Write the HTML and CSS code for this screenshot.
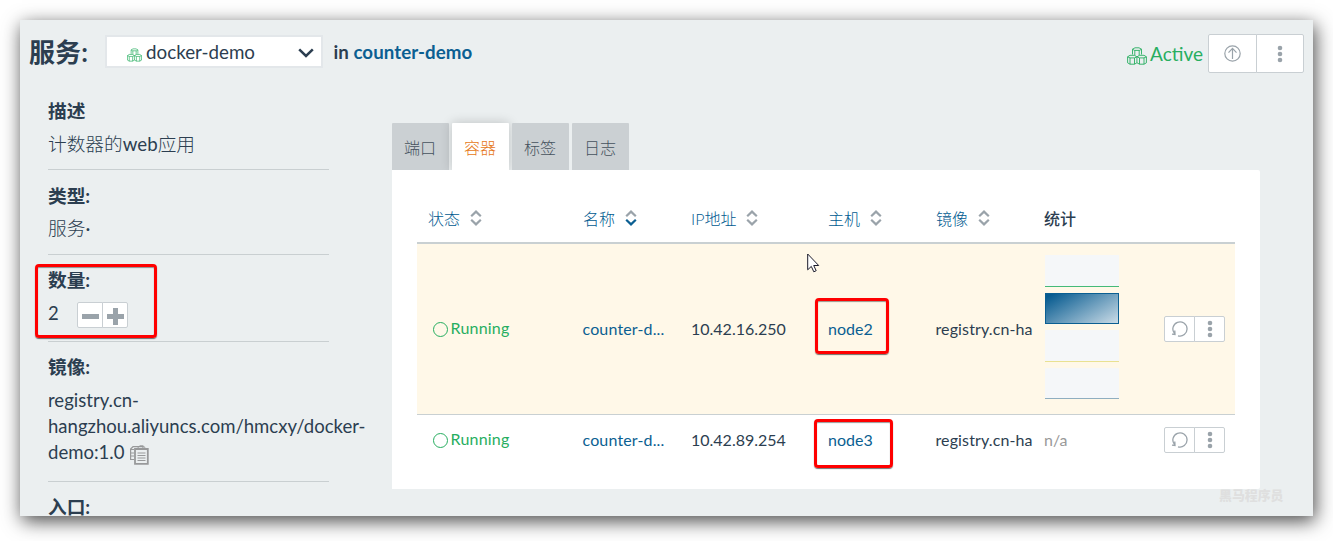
FILE: index.html
```html
<!DOCTYPE html>
<html lang="zh-CN">
<head>
<meta charset="utf-8">
<title>docker-demo</title>
<link rel="stylesheet" href="styles.css">
</head>
<body>
<svg class="defs" width="0" height="0">
  <symbol id="cubes" viewBox="0 0 20 18">
    <g fill="none" stroke="currentColor" stroke-width=".9" stroke-linejoin="round">
      <path d="M5.500 7.500V2.200L8 .8h4l2.500 1.400v5.300M5.500 2.200 7.500 3.400h5l2-1.200M7.800 3.400v5M12.200 3.400v5"/>
      <path d="M.6 9.800 3 8.300h4.400l2.500 1.500v6L7.500 17.200H3L.6 15.800zM.6 9.800 3 10.900h4.500l2.400-1.100M3 10.900v6.300M7.500 10.900v6.300"/>
      <path d="M10 9.800l2.500-1.500H17l2.400 1.500v6L17 17.200h-4.500L10 15.800M10 9.800l2.500 1.100H17l2.400-1.100M12.500 10.900v6.300M17 10.900v6.300"/>
    </g>
  </symbol>
  <symbol id="sort" viewBox="0 0 12 16">
    <path d="M1.200 6.200 6 1.600l4.800 4.600" fill="none" stroke="#9aa3aa" stroke-width="2.200"/>
    <path d="M1.200 9.800 6 14.400l4.800-4.600" fill="none" stroke="currentColor" stroke-width="2.200"/>
  </symbol>
  <symbol id="dots" viewBox="0 0 6 18">
    <g fill="#9aa3aa"><circle cx="3" cy="3" r="2.300"/><circle cx="3" cy="9" r="2.300"/><circle cx="3" cy="15" r="2.300"/></g>
  </symbol>
  <symbol id="restart" viewBox="0 0 18 16">
    <path d="M3.400 12.400A7.100 7.100 0 1 1 7 14.800M1 13.200l3 .3-.2-4" fill="none" stroke="#9aa3aa" stroke-width="1.300"/>
  </symbol>
</svg>
<div class="window">
  <header class="header">
    <h1>服务:</h1>
    <div class="select">
      <svg class="cubes-sm"><use href="#cubes"/></svg>
      <span>docker-demo</span>
      <svg class="chevron" viewBox="0 0 16 10"><path d="M1.200 1.300 8 8l6.800-6.700" fill="none" stroke="currentColor" stroke-width="2.500"/></svg>
    </div>
    <div class="stack">in <a>counter-demo</a></div>
    <div class="state">
      <svg class="cubes-lg"><use href="#cubes"/></svg>
      <span>Active</span>
    </div>
    <div class="btns big">
      <button><svg width="17" height="17" viewBox="0 0 17 17"><g fill="none" stroke="#9aa3aa" stroke-width="1.200"><circle cx="8.500" cy="8.500" r="7.700"/><path d="M8.500 14V3.300M4.500 7.600l4-4.300 4 4.300"/></g></svg></button>
      <button><svg width="6" height="18"><use href="#dots"/></svg></button>
    </div>
  </header>
  <div class="content">
    <aside class="side">
      <section class="s-desc"><h2>描述</h2><p>计数器的<span class="latin">web</span>应用</p></section>
      <section class="s-type"><h2>类型:</h2><p>服务<span class="latin">·</span></p></section>
      <section class="s-scale"><h2>数量:</h2>
        <div class="scale"><span>2</span>
          <div class="btns mini">
            <button><svg width="17" height="17"><path d="M0 8.500h17" stroke="#9aa3aa" stroke-width="5"/></svg></button>
            <button><svg width="17" height="17"><path d="M0 8.500h17M8.500 0v17" stroke="#9aa3aa" stroke-width="5"/></svg></button>
          </div>
        </div>
      </section>
      <section class="s-image"><h2>镜像:</h2>
        <p class="image">registry.cn-<br>hangzhou.aliyuncs.com/hmcxy/docker-<br>demo:1.0 <svg class="clip" viewBox="0 0 19 20"><g fill="none" stroke="#98999a"><path d="M4 14.500H.6V4L3 1.700h10V4M1 4.500h3M1 8h3M1 11h3" stroke-width="1.200"/><path d="M5 4h12.800v14.800H5z" stroke-width="1.800"/><path d="M8 4.500V2.300L10 .8h3L15 2.500v2zM7.500 8h8M7.500 10.500h8M7.500 13h8M7.500 15.500h8" stroke-width="1"/></g></svg></p>
      </section>
      <section class="s-entry"><h2>入口:</h2></section>
    </aside>
    <main class="main">
      <nav class="tabs">
        <a>端口</a><a class="active">容器</a><a>标签</a><a>日志</a>
      </nav>
      <div class="panel">
        <div class="row head">
          <div>状态<svg class="sort"><use href="#sort"/></svg></div>
          <div class="sorted">名称<svg class="sort"><use href="#sort"/></svg></div>
          <div>IP地址<svg class="sort"><use href="#sort"/></svg></div>
          <div>主机<svg class="sort"><use href="#sort"/></svg></div>
          <div>镜像<svg class="sort"><use href="#sort"/></svg></div>
          <div class="plain">统计</div>
          <div></div>
        </div>
        <div class="row first">
          <div class="running"><i></i><span>Running</span></div>
          <div class="cell link name">counter-d...</div>
          <div class="cell">10.42.16.250</div>
          <div class="cell link">node2</div>
          <div class="cell image-cell">registry.cn-ha</div>
          <div class="charts">
            <span class="cpu"></span><span class="mem"></span><span class="net"></span><span class="disk"></span>
          </div>
          <div class="btns small">
            <button><svg width="18" height="16"><use href="#restart"/></svg></button>
            <button><svg width="6" height="18"><use href="#dots"/></svg></button>
          </div>
        </div>
        <div class="row second">
          <div class="running"><i></i><span>Running</span></div>
          <div class="cell link name">counter-d...</div>
          <div class="cell">10.42.89.254</div>
          <div class="cell link">node3</div>
          <div class="cell image-cell">registry.cn-ha</div>
          <div class="cell na">n/a</div>
          <div class="btns small">
            <button><svg width="18" height="16"><use href="#restart"/></svg></button>
            <button><svg width="6" height="18"><use href="#dots"/></svg></button>
          </div>
        </div>
      </div>
    </main>
  </div>
</div>
<div class="mark mark-scale"></div>
<div class="mark mark-node2"></div>
<div class="mark mark-node3"></div>
<svg class="cursor" viewBox="0 0 13 20"><path d="M.7 1v15.800l3.600-3.400 2.500 5.400 2.400-1.100-2.500-5.200h5z" fill="#fff" stroke="#1b1b2b" stroke-width="1"/></svg>
<div class="watermark">黑马程序员</div>
</body>
</html>
```
FILE: styles.css
```css
* { box-sizing: border-box; }
body {
  margin: 0; padding: 20px; height: 541px; overflow: hidden; position: relative;
  background: #fff; color: #2c3e50;
  font-family: Lato, "Noto Sans CJK SC", sans-serif; font-size: 16px;
}
h1, h2, p { margin: 0; }
svg { display: block; flex: none; }
.defs { position: absolute; }
.latin { font-weight: 400; }
.window {
  width: 1293px; height: 496px; overflow: hidden; background: #ebeff0;
  box-shadow: 2px 5px 18px rgba(0, 0, 0, .72);
}
.header { display: flex; height: 65px; padding: 0 9px; }
h1 { width: 76px; font-size: 26px; line-height: 65px; font-weight: 700; white-space: nowrap; letter-spacing: .1px; }
.select {
  display: flex; align-items: center; width: 218px; height: 33px; margin-top: 15px;
  padding: 0 7px 0 20px; border: 2px solid #e3e7ea; background: #fff; font-size: 18.8px;
}
.select span { margin-left: 4px; line-height: 30px; }
.cubes-sm { width: 15px; height: 14px; margin-top: 6px; color: #27ae60; }
.chevron { width: 16px; height: 10px; margin: 3px 0 0 auto; }
.stack { margin-left: 10.500px; font-size: 18.7px; line-height: 64px; font-weight: 700; letter-spacing: .05px; }
a, .link { color: #0b5f92; }
.state { display: flex; align-items: center; height: 68px; margin-left: auto; color: #27ae60; font-size: 19px; }
.state span { margin: 0 5px 0 3px; line-height: 68px; height: 68px; }
.cubes-lg { width: 20px; height: 18px; margin-top: 3px; }
.btns { display: flex; }
.btns button {
  display: flex; align-items: center; justify-content: center; padding: 0;
  border: 1px solid #c9cfd3; background: #fff; border-radius: 0;
}
.btns button + button { margin-left: -1px; }
.btns button:first-child { border-radius: 2px 0 0 2px; }
.btns button:last-child { border-radius: 0 2px 2px 0; }
.big { height: 39px; margin-top: 14px; }
.big button { width: 49px; }
.big button + button { width: 48px; }
.content { display: flex; height: 431px; }
.side { width: 372px; padding-left: 28px; font-size: 18.7px; }
.side section { width: 281px; padding-top: 13px; border-bottom: 1px solid #c9cfd1; white-space: nowrap; }
.side h2 { font-size: 18.7px; line-height: 26px; font-weight: 700; }
.side p { line-height: 38px; font-weight: 300; }
.side .s-desc, .side .s-type { height: 85px; }
.side .s-desc p { line-height: 40px; }
.side .s-scale { height: 87px; padding-top: 12px; }
.side .s-image { height: 140px; padding-top: 12px; }
.side .s-entry { border: 0; height: 34px; padding-top: 12px; }
.scale { display: flex; height: 37px; padding-top: 9px; }
.scale > span { width: 29px; line-height: 22px; font-size: 18.5px; }
.mini button { width: 26px; height: 26px; padding-top: 2px; }
.side .image { padding-top: 7px; line-height: 26px; font-weight: 400; font-size: 18.550px; }
.clip { display: inline-block; width: 19px; height: 20px; margin-left: 1px; vertical-align: -6px; }
.main { width: 868px; padding-top: 38px; }
.tabs { display: flex; gap: 3px; height: 47px; }
.tabs a {
  width: 57px; height: 47px; padding-right: 1px; line-height: 50px; text-align: center; font-weight: 300;
  background: #cbd0d3; color: #46525e; border-radius: 1px 1px 0 0;
}
.tabs .active { background: #fff; color: #e67817; box-shadow: 0 0 12px rgba(0, 0, 0, .2); }
.panel { position: relative; height: 319px; padding: 24px 25px; background: #fff; border-radius: 0 2px 2px 0; }
.row {
  display: grid; grid-template-columns: 156px 108px 137px 108px 108px 120px 61px;
  align-items: center; padding-left: 10px; white-space: nowrap;
}
.head { height: 50px; border-bottom: 2px solid #c9d0d2; color: #005a90; font-weight: 300; }
.head > div { display: flex; align-items: center; }
.head > div:first-child { padding-left: 1px; }
.sort { width: 12px; height: 16px; margin-left: 10px; color: #9aa3aa; }
.sorted .sort { color: #0b5f92; }
.head .plain { color: #2c3e50; font-weight: 500; }
.first { height: 171px; border-bottom: 1px solid #c9d0d2; background: #fff8e8; }
.second { height: 50px; }
.cell { padding-bottom: 2px; }
.name { margin-left: -.5px; letter-spacing: .15px; }
.image-cell { margin-left: -.5px; letter-spacing: .12px; }
.running { display: flex; align-items: center; color: #27ae60; padding-left: 5.500px; }
.running i { width: 15px; height: 15px; margin-right: 3px; border: 1px solid #27ae60; border-radius: 50%; }
.running span { padding-bottom: 3px; letter-spacing: .2px; }
.na { color: #999; }
.charts { display: grid; gap: 6px; padding-left: 1px; margin-top: -4px; }
.charts span { width: 74px; height: 32px; background: #f5f7f9; border-bottom: 1px solid #45ba78; }
.charts .mem { height: 31px; border: 1px solid #0b5f92; background: linear-gradient(150deg, #075b90 5%, #cbdce7 100%); }
.charts .net { border-color: #e9e191; }
.charts .disk { border-color: #8faec0; height: 31px; }
.small button { width: 31px; height: 26px; }
.mark { position: absolute; border: 3px solid #f00; border-radius: 4px; box-shadow: 0 1px 1px rgba(0, 0, 0, .55), inset 0 1px 1px rgba(0, 0, 0, .4); }
.mark-scale { left: 35px; top: 264px; width: 122px; height: 74px; }
.mark-node2 { left: 815px; top: 298px; width: 74px; height: 56px; }
.mark-node3 { left: 814px; top: 419px; width: 79px; height: 49px; }
.cursor { position: absolute; left: 807px; top: 253px; width: 13px; height: 20px; }
.watermark { position: absolute; left: 1219px; top: 485px; font-size: 12.900px; line-height: 20px; font-weight: 900; color: #dfdfdf; }
```
